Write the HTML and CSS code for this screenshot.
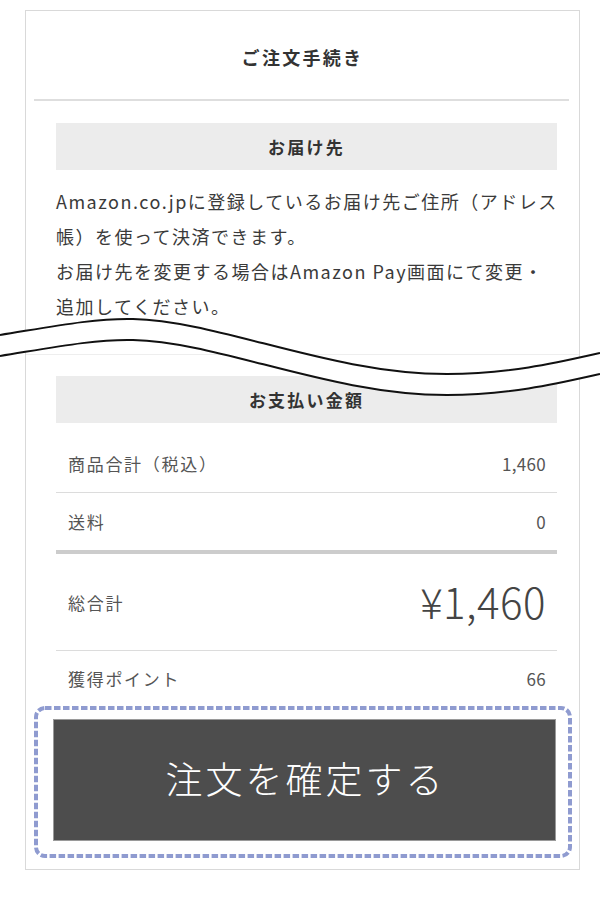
FILE: index.html
```html
<!DOCTYPE html>
<html lang="ja">
<head>
<meta charset="utf-8">
<title>ご注文手続き</title>
<link rel="stylesheet" href="styles.css">
</head>
<body>
<div class="page">
  <div class="card">
    <h1 class="title">ご注文手続き</h1>
    <div class="title-rule"></div>

    <section class="section section-address">
      <h2 class="section-head">お届け先</h2>
      <p class="note">Amazon.co.jpに登録しているお届け先ご住所（アドレス<br>帳）を使って決済できます。<br>お届け先を変更する場合はAmazon Pay画面にて変更・<br>追加してください。</p>
    </section>

    <div class="section-rule"></div>

    <section class="section section-pay">
      <h2 class="section-head">お支払い金額</h2>
      <div class="rows">
        <div class="row"><span class="label">商品合計（税込）</span><span class="value">1,460</span></div>
        <div class="row row-last"><span class="label">送料</span><span class="value">0</span></div>
        <div class="row row-total"><span class="label">総合計</span><span class="value total">¥1,460</span></div>
        <div class="row row-points"><span class="label">獲得ポイント</span><span class="value">66</span></div>
      </div>
      <div class="confirm-wrap">
        <svg class="focus-ring" width="538" height="152" viewBox="0 0 538 152" aria-hidden="true">
          <rect x="2" y="2" width="534" height="148" rx="9" ry="9" fill="none" stroke="#8f9bd0" stroke-width="4" stroke-dasharray="6.5 2.5"/>
        </svg>
        <button class="confirm" type="button">注文を確定する</button>
      </div>
    </section>
  </div>

  <svg class="tear" width="600" height="110" viewBox="0 300 600 110" aria-hidden="true">
    <path d="M0,335 C50,327 95,318 133,319 C220,321 330,374 447,374 C510,374 560,362 600,353 L600,374 C560,383 510,395 447,395 C330,395 220,342 133,340 C95,339 50,348 0,356 Z" fill="#ffffff"/>
    <path d="M0,335 C50,327 95,318 133,319 C220,321 330,374 447,374 C510,374 560,362 600,353" fill="none" stroke="#111" stroke-width="2"/>
    <path d="M0,356 C50,348 95,339 133,340 C220,342 330,395 447,395 C510,395 560,383 600,374" fill="none" stroke="#111" stroke-width="2"/>
  </svg>
</div>
</body>
</html>
```

FILE: styles.css
```css
* { box-sizing: border-box; }
html, body { margin: 0; padding: 0; background: #fff; }
body {
  font-family: "Noto Sans CJK JP", "Noto Sans", sans-serif;
  color: #333;
}
.page {
  position: relative;
  width: 600px;
  height: 908px;
  padding-top: 10px;
}
.card {
  margin-left: 25px;
  width: 555px;
  border: 1px solid #d9d9d9;
  padding: 0 0 11px;
}
.title {
  margin: 0;
  height: 88px;
  display: flex;
  align-items: center;
  justify-content: center;
  font-size: 18px;
  font-weight: 700;
  letter-spacing: 2.3px;
  color: #333;
  padding-top: 4px;
}
.title-rule {
  margin: 0 10px 0 8px;
  height: 2px;
  background: #dedede;
}
.section { padding: 0 22px 0 30px; }
.section-address { padding-top: 22px; }
.section-head {
  margin: 0;
  height: 47px;
  display: flex;
  align-items: center;
  justify-content: center;
  background: #ececec;
  font-size: 17px;
  font-weight: 700;
  letter-spacing: 2.2px;
  color: #333;
}
.note {
  margin: 14px 0 0;
  font-size: 18px;
  line-height: 35px;
  letter-spacing: 1.5px;
  color: #3a3a3a;
  white-space: nowrap;
}
.section-rule {
  margin-top: 30px;
  height: 1px;
  background: #eeeeee;
}
.section-pay { padding-top: 21px; }
.rows { margin-top: 11px; }
.row {
  height: 59px;
  display: flex;
  align-items: center;
  justify-content: space-between;
  padding: 0 11px 0 12px;
  border-bottom: 1px solid #dcdcdc;
  font-size: 17px;
  color: #555;
}
.label { letter-spacing: 1.7px; }
.value { letter-spacing: 0.3px; }
.row-last { height: 61px; border-bottom: 4px solid #cccccc; }
.row-total { height: 97px; }
.total {
  font-size: 42px;
  font-weight: 300;
  color: #444;
  letter-spacing: 0.5px;
  margin-top: -3px;
}
.row-points { height: 55px; border-bottom: 0; }
.confirm-wrap {
  position: relative;
  margin: 0 -15px 0 -22px;
  padding: 13px 16px 17px 19px;
}
.focus-ring {
  position: absolute;
  left: 0;
  top: 0;
}
.confirm {
  display: flex;
  align-items: center;
  justify-content: center;
  width: 100%;
  height: 122px;
  margin: 0;
  border: 1px solid #9a9a9a;
  background: #4d4d4d;
  color: #fff;
  font-family: "Noto Sans CJK JP", "Noto Sans", sans-serif;
  font-size: 37px;
  font-weight: 300;
  letter-spacing: 3px;
  padding: 0 0 4px 2px;
}
.tear {
  position: absolute;
  left: 0;
  top: 300px;
}
```
